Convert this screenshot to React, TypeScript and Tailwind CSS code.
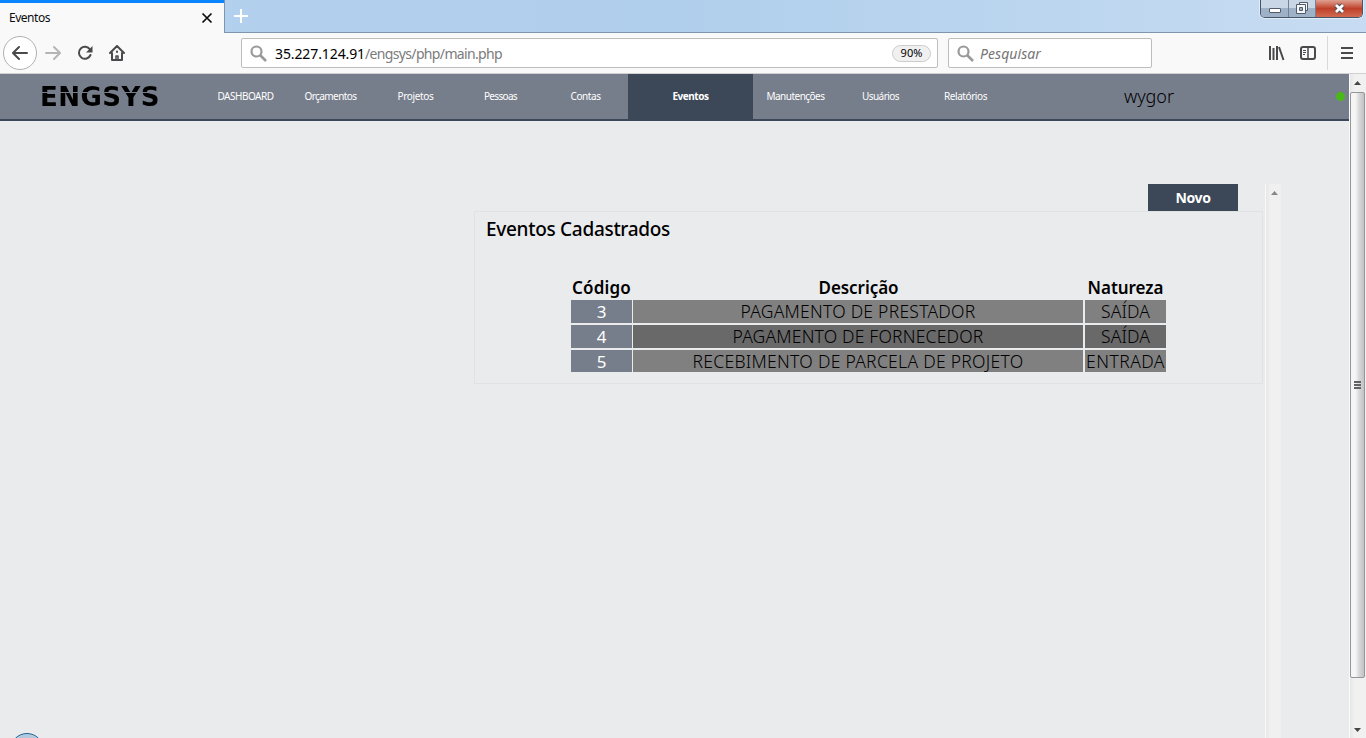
import { useLayoutEffect, useRef, useState } from 'react';
import type { ReactNode } from 'react';

type LabelProps = { width: number; className?: string; children: string };

function Label({ width, className = '', children }: LabelProps) {
  const ref = useRef<HTMLSpanElement>(null);
  const [tracking, setTracking] = useState(0);
  useLayoutEffect(() => {
    if (ref.current) {
      const natural = ref.current.getBoundingClientRect().width;
      setTracking((width - natural) / children.length);
    }
  }, [width, children]);
  return (
    <span ref={ref} className={`inline-block whitespace-nowrap ${className}`} style={{ letterSpacing: tracking }}>
      {children}
    </span>
  );
}

function TitleBar() {
  return (
    <div className="flex h-[33px] bg-linear-to-r from-[#b4d1ee] via-[#b0cfec] to-[#c7dcf2]">
      <div className="flex h-[33px] w-[224px] shrink-0 items-center justify-between border-t-[3px] border-[#0a84ff] bg-[#f9f9fa] pr-[11px] pl-[9px]">
        <Label width={41} className="text-[12px] leading-[28px] text-[#0c0c0d]">Eventos</Label>
        <svg className="size-[12px]" viewBox="0 0 12 12" stroke="#0c0c0d" strokeWidth="1.7">
          <path d="M1.5 1.5l9 9M10.500 1.500l-9 9" />
        </svg>
      </div>
      <div className="flex h-[33px] grow justify-between border-b border-l border-[#7e95ad]">
        <svg className="mt-[9px] ml-[9px] size-[14px]" viewBox="0 0 14 14" stroke="#fff" strokeWidth="2">
          <path d="M7 0v14M0 7h14" />
        </svg>
        <div className="mr-[3px] flex h-[18px] overflow-hidden rounded-b-[5px] border border-t-0 border-[#465568] shadow-[0_0_0_1px_#dfebf7]">
          <div className="flex w-[28px] items-end justify-center border-r border-[#6f8297] bg-linear-to-b from-[#c8d6e5] from-50% to-[#9fb1c7] to-50% pb-[4px]">
            <div className="h-[5px] w-[12px] rounded-[1px] border border-[#535b6b] bg-white" />
          </div>
          <div className="flex w-[27px] items-center justify-center border-r border-[#6f8297] bg-linear-to-b from-[#c8d6e5] from-50% to-[#9fb1c7] to-50%">
            <svg className="mr-px mb-[1px] h-[12px] w-[12px]" viewBox="0 0 12 12" fill="#f5f6f8" stroke="#535b6b">
              <path d="M3.500.5h8v8h-8z" />
              <path d="M.5 2.500h9v9h-9z" />
              <path d="M3.500 5.500h3v3h-3z" fill="#9fb1c7" />
            </svg>
          </div>
          <div className="flex w-[46px] items-center justify-center bg-linear-to-b from-[#dda090] from-0% via-[#bf3f29] via-50% to-[#d06a50]">
            <svg className="mb-[1px] h-[11px] w-[13px]" viewBox="0 0 13 11" fill="none">
              <path d="M3 2l7 7M10 2L3 9" stroke="#4d4b58" strokeWidth="4.600" />
              <path d="M3 2l7 7M10 2L3 9" stroke="#fff" strokeWidth="2.800" />
            </svg>
          </div>
        </div>
      </div>
    </div>
  );
}

function Magnifier() {
  return (
    <svg className="size-[17px] shrink-0" viewBox="0 0 17 17" fill="none" stroke="#999" strokeWidth="2.200">
      <circle cx="6.500" cy="6.500" r="5" />
      <path d="M10 10l6 6" strokeWidth="2.600" />
    </svg>
  );
}

function Toolbar() {
  return (
    <div className="flex h-[41px] items-center border-b border-[#d0d0d0] bg-[#f9f9fa]">
      <div className="ml-[3px] flex size-[34px] items-center justify-center rounded-full border border-[#b1b1b3] bg-white">
        <svg className="size-[16px]" viewBox="0 0 16 16" fill="none" stroke="#4a4a4c" strokeWidth="2" strokeLinecap="round" strokeLinejoin="round">
          <path d="M15 8H1.500M7 2L1 8l6 6" />
        </svg>
      </div>
      <svg className="ml-[8px] size-[16px]" viewBox="0 0 16 16" fill="none" stroke="#b5b5b6" strokeWidth="2" strokeLinecap="round" strokeLinejoin="round">
        <path d="M1 8h13.500M9 2l6 6-6 6" />
      </svg>
      <svg className="ml-[16px] size-[16px]" viewBox="0 0 16 16" fill="none" stroke="#4a4a4c" strokeWidth="2">
        <path d="M13 4.500A6 6 0 1 0 13.500 10" strokeLinecap="round" />
        <path d="M15.500 1v6.500H9z" fill="#4a4a4c" stroke="none" />
      </svg>
      <svg className="ml-[16px] size-[16px]" viewBox="0 0 16 16" fill="none" stroke="#4a4a4c" strokeWidth="2" strokeLinecap="round" strokeLinejoin="round">
        <path d="M1 8l7-7 7 7M3 8v7h10V8" />
        <path d="M7 15v-4h2v4" strokeWidth="1.500" />
        <path d="M8 6.500v.5" />
      </svg>
      <div className="ml-[116px] flex h-[30px] w-[697px] items-center rounded-[2px] border border-[#bdbdbe] bg-white pr-[6px] pl-[8px]">
        <Magnifier />
        <span className="ml-[8px] flex text-[14px]">
          <Label width={90} className="text-black">35.227.124.91</Label>
          <Label width={137} className="text-[#7b7b7c]">/engsys/php/main.php</Label>
        </span>
        <span className="ml-auto flex h-[17px] w-[39px] items-center justify-center rounded-full border border-[#ccc] bg-[#f0f0f1] pt-px text-[11px] text-black">
          <Label width={22}>90%</Label>
        </span>
      </div>
      <div className="ml-[10px] flex h-[30px] w-[204px] items-center rounded-[2px] border border-[#bdbdbe] bg-white pl-[8px]">
        <Magnifier />
        <Label width={61} className="ml-[6px] text-[14px] text-[#757575] italic">Pesquisar</Label>
      </div>
      <svg className="ml-[116px] h-[16px] w-[17px]" viewBox="0 0 17 16" stroke="#4a4a4c" strokeWidth="2">
        <path d="M2 1v14M5.500 3v12M9 1v14M11 2l4.500 13" />
      </svg>
      <svg className="ml-[15px] h-[14px] w-[16px]" viewBox="0 0 16 14" fill="none" stroke="#4a4a4c" strokeWidth="2">
        <rect x="1" y="1" width="14" height="12" rx="2" />
        <path d="M8 1v12" strokeWidth="1.500" />
        <path d="M3 4.500h3M3 6.500h3M3 8.500h2" strokeWidth="1" />
      </svg>
      <div className="ml-[11px] h-[34px] w-px bg-[#d9d9da]" />
      <svg className="ml-[13px] h-[12px] w-[12px]" viewBox="0 0 12 12" stroke="#4a4a4c" strokeWidth="2">
        <path d="M0 1h12M0 6h12M0 11h12" />
      </svg>
    </div>
  );
}

function NavItem({ width, active = false, children }: { width: number; active?: boolean; children: string }) {
  return (
    <a className={active ? 'flex h-full w-[125px] items-center justify-center bg-[#3c4858] font-bold' : 'flex h-full w-[85px] items-center justify-center'}>
      <Label width={width}>{children}</Label>
    </a>
  );
}

function Header() {
  return (
    <header className="flex h-[47px] items-center border-b-2 border-[#3c4858] bg-[#777e8b] text-[10px] text-white">
      <div className="ml-[40px] flex h-full w-[163px] items-center">
        <span className="bg-[linear-gradient(#000_0_9px,#777e8b_9px_10px,#000_10px)] bg-clip-text font-['DejaVu_Sans',sans-serif] text-[26px] leading-[28px] font-bold text-transparent">
          <Label width={120}>ENGSYS</Label>
        </span>
      </div>
      <nav className="flex h-full">
        <NavItem width={56}>DASHBOARD</NavItem>
        <NavItem width={52}>Orçamentos</NavItem>
        <NavItem width={36}>Projetos</NavItem>
        <NavItem width={33}>Pessoas</NavItem>
        <NavItem width={30}>Contas</NavItem>
        <NavItem width={36} active>Eventos</NavItem>
        <NavItem width={58}>Manutenções</NavItem>
        <NavItem width={37}>Usuários</NavItem>
        <NavItem width={43}>Relatórios</NavItem>
      </nav>
      <Label width={50} className="ml-[116px] text-[18px] font-light text-black">wygor</Label>
      <div className="mr-[4px] ml-auto size-[9px] rounded-full bg-[#48b919]" />
    </header>
  );
}

function Cell({ className, children }: { className: string; children: ReactNode }) {
  return <div className={`flex items-center justify-center ${className}`}>{children}</div>;
}

const rows = [
  { code: '3', text: 'PAGAMENTO DE PRESTADOR', width: 235, kind: 'SAÍDA', kindWidth: 49 },
  { code: '4', text: 'PAGAMENTO DE FORNECEDOR', width: 251, kind: 'SAÍDA', kindWidth: 49 },
  { code: '5', text: 'RECEBIMENTO DE PARCELA DE PROJETO', width: 331, kind: 'ENTRADA', kindWidth: 79 },
];

function EventsPanel() {
  return (
    <div className="ml-[474px] w-[789px]">
      <div className="flex justify-end pr-[25px]">
        <button className="h-[27px] w-[90px] bg-[#3c4858] text-[14px] font-bold text-white">
          <Label width={35}>Novo</Label>
        </button>
      </div>
      <section className="h-[173px] border border-[#e1e2e4] pt-[4px] text-black">
        <h1 className="ml-[11px] h-[59px] text-[19px] leading-[26px] font-medium">
          <Label width={184}>Eventos Cadastrados</Label>
        </h1>
        <div className="ml-[96px] w-[595px] text-[17px] leading-[23px]">
          <div className="grid h-[25px] grid-cols-[61px_450px_81px] gap-x-[1.5px] font-semibold">
            <Cell className=""><Label width={59}>Código</Label></Cell>
            <Cell className=""><Label width={80}>Descrição</Label></Cell>
            <Cell className=""><Label width={76}>Natureza</Label></Cell>
          </div>
          <div className="flex flex-col gap-[2px] text-[17.5px] font-light">
            {rows.map((row) => {
              const shade = row.code === '4' ? 'bg-[#696969]' : 'bg-[#808080]';
              const height = row.code === '5' ? 'h-[22px]' : 'h-[23px]';
              return (
                <div key={row.code} className={`flex ${height}`}>
                  <Cell className="mr-px w-[61px] bg-[#777e8b] text-[17px] font-normal text-white">{row.code}</Cell>
                  <Cell className={`mr-[2px] w-[450px] ${shade}`}><Label width={row.width}>{row.text}</Label></Cell>
                  <Cell className={`w-[81px] ${shade}`}><Label width={row.kindWidth}>{row.kind}</Label></Cell>
                </div>
              );
            })}
          </div>
        </div>
      </section>
    </div>
  );
}

function Scrollbar() {
  return (
    <div className="flex h-full w-[17px] shrink-0 flex-col items-start border-l border-[#fafafa] bg-linear-to-r from-[#e6e6e6] to-[#f1f1f1] to-30%">
      <svg className="mt-[7px] ml-[4px] h-[4px] w-[7px]" viewBox="0 0 7 4"><path d="M3.500 0L7 4H0z" fill="#444" /></svg>
      <div className="mt-[7px] flex h-[586px] w-[15px] flex-col items-center justify-center gap-px rounded-[2px] border border-[#969698] bg-linear-to-r from-[#f5f5f5] from-35% via-[#dadadc] via-60% to-[#c2c2c6]">
        <div className="h-[2px] w-[7px] bg-[#626266]" />
        <div className="h-[2px] w-[7px] bg-[#626266]" />
        <div className="h-[2px] w-[7px] bg-[#626266]" />
      </div>
      <svg className="mt-auto mb-[6px] ml-[4px] h-[4px] w-[7px]" viewBox="0 0 7 4"><path d="M3.500 4L7 0H0z" fill="#444" /></svg>
    </div>
  );
}

export default function App() {
  return (
    <div className="flex h-[738px] w-[1366px] flex-col overflow-hidden bg-[#eaebed] font-['Noto_Sans',sans-serif]">
      <TitleBar />
      <Toolbar />
      <div className="flex h-[664px]">
        <div className="flex w-[1349px] flex-col">
          <Header />
          <main className="relative flex grow overflow-hidden pt-[63px]">
            <EventsPanel />
            <div className="ml-[2px] flex w-[16px] justify-center border-l border-[#f8f8f8] bg-linear-to-r from-[#e8e8e9] to-[#f0f0f0] to-30% pt-[7px] pl-[2px]">
              <svg className="h-[4px] w-[7px]" viewBox="0 0 7 4"><path d="M3.500 0L7 4H0z" fill="#888" /></svg>
            </div>
            <div className="absolute -bottom-[29px] left-[10px] size-[34px] rounded-full border border-[#28608c] bg-[#b4c8db] shadow-[inset_0_0_0_1px_#a8d2ed]" />
          </main>
        </div>
        <Scrollbar />
      </div>
    </div>
  );
}
